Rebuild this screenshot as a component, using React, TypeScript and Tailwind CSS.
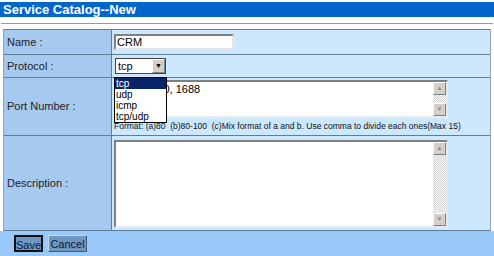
import React from "react";

const font = { fontFamily: '"Liberation Sans", Arial, sans-serif' };

const Scrollbar = () => (
  <div className="flex w-[13px] flex-col justify-between bg-[#e6e6e6] bg-[repeating-conic-gradient(#d8d8d8_0%_25%,#f4f4f4_0%_50%)] bg-[length:2px_2px]">
    <div className="flex h-[13px] items-center justify-center border border-t-white border-l-white border-r-[#808080] border-b-[#808080] bg-[#d4d0c8] text-[6px] text-[#888]">
      ▲
    </div>
    <div className="flex h-[13px] items-center justify-center border border-t-white border-l-white border-r-[#808080] border-b-[#808080] bg-[#d4d0c8] text-[6px] text-[#888]">
      ▼
    </div>
  </div>
);

const FakeTextarea = ({ value, height }: { value: string; height: string }) => (
  <div className={`flex w-[334px] border-2 border-t-[#808080] border-l-[#808080] border-r-[#e8e8e8] border-b-[#e8e8e8] bg-white ${height}`}>
    <div className="flex-1 px-[1px] pt-[1px] text-[11px] leading-[13px] text-black">{value}</div>
    <Scrollbar />
  </div>
);

const Row = ({
  label,
  height,
  children,
  last,
}: {
  label: string;
  height: string;
  children: React.ReactNode;
  last?: boolean;
}) => (
  <div className={`grid grid-cols-[108px_1fr] border-t border-[#5f7c99] ${last ? "border-b" : ""} ${height}`}>
    <div className="flex items-center border-r border-[#5f7c99] bg-[#a6c9ef] pl-[3px] text-[11px] text-[#222]">
      {label}
    </div>
    <div className="bg-[#cce8ff]">{children}</div>
  </div>
);

export default function App() {
  return (
    <div className="relative h-[256px] w-[494px] overflow-hidden bg-white" style={font}>
      <div className="mt-[2px] flex h-[15px] items-center bg-[#0066cc] pl-[3px] text-[13px] font-bold text-white">
        Service Catalog--New
      </div>
      <div className="mx-[1px] mt-[6px] h-px bg-[#9a9a9a]" />
      <div className="ml-[3px] mt-[5px] w-[488px] border-r border-l border-[#a0a0a0]">
        <Row label="Name :" height="h-[25px]">
          <div className="flex h-full items-center pl-[2px]">
            <div className="h-[16px] w-[120px] border-2 border-t-[#808080] border-l-[#808080] border-r-[#e4e4e4] border-b-[#e4e4e4] bg-white px-[1px] text-[11px] leading-[12px]">
              CRM
            </div>
          </div>
        </Row>
        <Row label="Protocol :" height="h-[23px]">
          <div className="flex h-full items-center pl-[3px]">
            <div className="flex h-[16px] w-[51px] border border-[#444] bg-white">
              <div className="flex-1 pl-[2px] text-[11px] leading-[14px]">tcp</div>
              <div className="flex w-[13px] items-center justify-center border border-t-white border-l-white border-r-[#808080] border-b-[#808080] bg-[#d4d0c8] text-[7px] text-black">
                ▼
              </div>
            </div>
          </div>
        </Row>
        <Row label="Port Number :" height="h-[58px]">
          <div className="flex flex-col pl-[2px] pt-[2px]">
            <FakeTextarea value="21, 80-100, 1688" height="h-[38px]" />
            <div className="mt-[3px] whitespace-nowrap text-[8.5px] leading-[10px] text-[#111]">
              Format: (a)80&nbsp;&nbsp;(b)80-100&nbsp;&nbsp;(c)Mix format of a and b. Use comma to divide each ones(Max 15)
            </div>
          </div>
        </Row>
        <Row label="Description :" height="h-[96px]" last>
          <div className="pl-[2px] pt-[4px]">
            <FakeTextarea value="" height="h-[88px]" />
          </div>
        </Row>
      </div>
      <div className="flex h-[26px] items-center gap-[5px] bg-[#99c9f8] pl-[14px] pb-[2px]">
        <button className="h-[17px] w-[29px] border-2 border-[#111] bg-[#7097c2] text-[11px] text-[#0a1a40]">
          Save
        </button>
        <button className="h-[17px] w-[39px] border border-t-[#c4d8ee] border-l-[#c4d8ee] border-r-[#3c5a80] border-b-[#3c5a80] bg-[#7097c2] text-[11px] text-[#0a1a40]">
          Cancel
        </button>
      </div>

      <div className="absolute left-[114px] top-[77px] w-[53px] border border-black bg-white text-[10px] leading-[11px]">
        <div className="h-[11px] bg-[#0a246a] pl-[1px] text-white">tcp</div>
        <div className="h-[11px] pl-[1px]">udp</div>
        <div className="h-[11px] pl-[1px]">icmp</div>
        <div className="h-[11px] pl-[1px]">tcp/udp</div>
      </div>
    </div>
  );
}
